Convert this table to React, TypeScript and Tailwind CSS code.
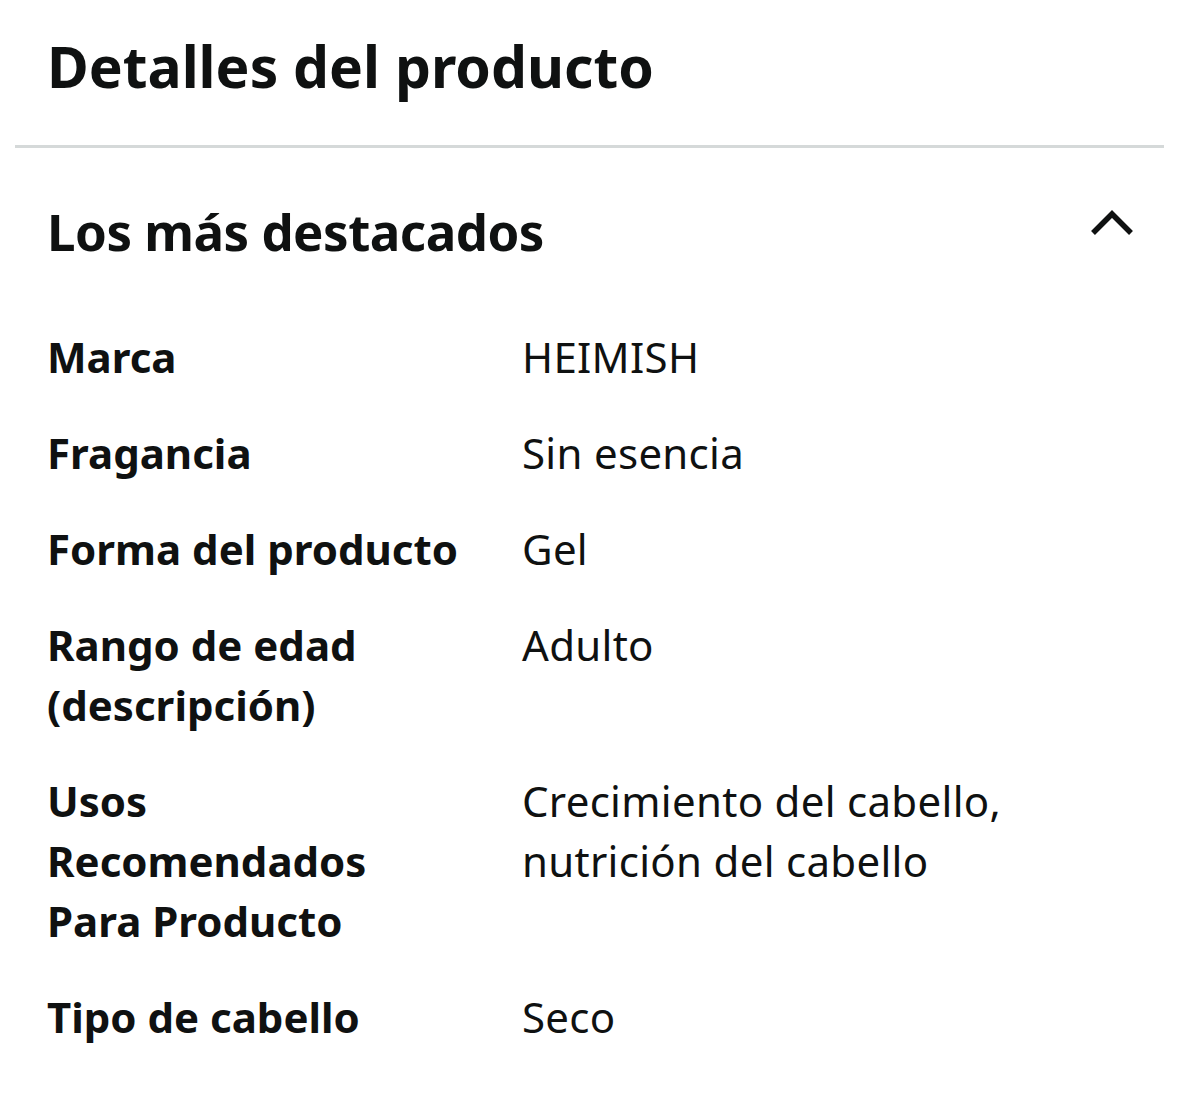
const rows: {label: string[]; value: string[]}[] = [
  {label: ['Marca'], value: ['HEIMISH']},
  {label: ['Fragancia'], value: ['Sin esencia']},
  {label: ['Forma del producto'], value: ['Gel']},
  {label: ['Rango de edad', '(descripción)'], value: ['Adulto']},
  {label: ['Usos', 'Recomendados', 'Para Producto'], value: ['Crecimiento del cabello,', 'nutrición del cabello']},
  {label: ['Tipo de cabello'], value: ['Seco']},
];

export default function App() {
  return (
    <div className="min-h-[1093px] w-[1179px] bg-white px-[15px] pt-[30px] font-['Noto_Sans',sans-serif] text-[#0f1111]">
      <h1 className="px-[32px] text-[57px] font-bold leading-[72px]">Detalles del producto</h1>

      <div className="mt-[43px] h-[3px] bg-[#d5d9d9]" />

      <section className="pt-[51px]">
        <div className="flex items-start justify-between pl-[32px] pr-[29px]">
          <h2 className="text-[51px] font-bold leading-[64px] tracking-[-0.5px]">Los más destacados</h2>
          <svg className="mt-[9px]" width="46" height="28" viewBox="0 0 46 28" fill="none" aria-hidden>
            <polyline points="4,25 23,6 42,25" stroke="#0f1111" strokeWidth="5.5" />
          </svg>
        </div>

        <dl className="mt-[64px] flex flex-col gap-[36px] px-[32px]">
          {rows.map((row) => (
            <div key={row.label.join(' ')} className="flex text-[42px] leading-[60px]">
              <dt className="w-[475px] shrink-0 font-bold">
                {row.label.map((l) => (
                  <div key={l}>{l}</div>
                ))}
              </dt>
              <dd className="tracking-[0.3px]">
                {row.value.map((v) => (
                  <div key={v}>{v}</div>
                ))}
              </dd>
            </div>
          ))}
        </dl>
      </section>
    </div>
  );
}
